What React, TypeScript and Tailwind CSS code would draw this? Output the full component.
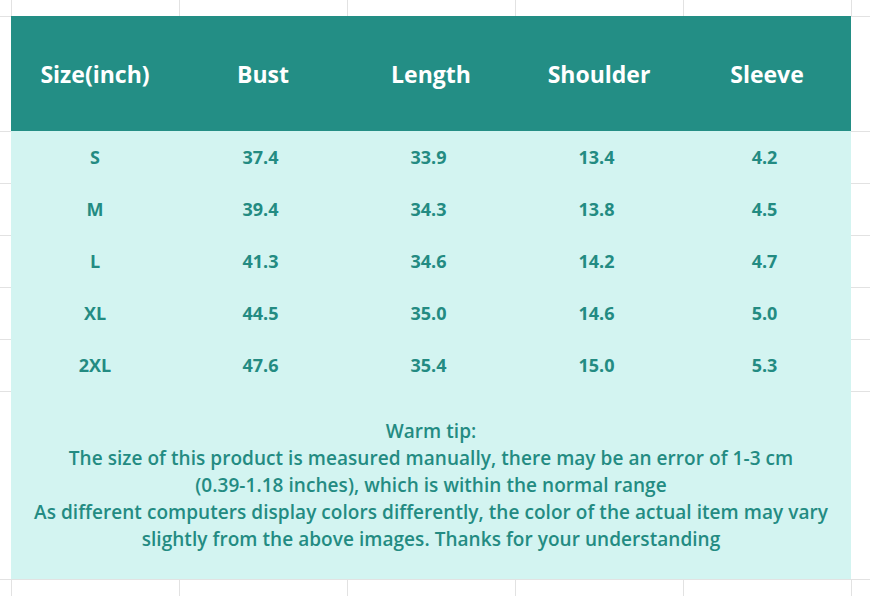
const headers = ['Size(inch)', 'Bust', 'Length', 'Shoulder', 'Sleeve']

const rows = [
  ['S', '37.4', '33.9', '13.4', '4.2'],
  ['M', '39.4', '34.3', '13.8', '4.5'],
  ['L', '41.3', '34.6', '14.2', '4.7'],
  ['XL', '44.5', '35.0', '14.6', '5.0'],
  ['2XL', '47.6', '35.4', '15.0', '5.3'],
]

// spreadsheet gridline cell for the white margins
function Blank({ className = '' }: { className?: string }) {
  return <div className={`border-[#e2e2e2] bg-white ${className}`} />
}

export default function App() {
  return (
    <div
      className="grid h-[596px] w-[870px] overflow-hidden bg-white grid-cols-[11px_repeat(5,168px)_1fr] grid-rows-[16px_115px_repeat(5,52px)_188px_1fr]"
      style={{ fontFamily: '"Open Sans", "Noto Sans", sans-serif' }}
    >
      {/* top margin */}
      <Blank />
      {headers.map((h) => (
        <Blank key={h} className="border-l" />
      ))}
      <Blank className="border-l" />

      {/* header */}
      <Blank className="border-t" />
      {headers.map((h) => (
        <div
          key={h}
          className="flex items-center justify-center bg-[#238e85] pt-[2px] text-[23px] font-bold text-white"
        >
          {h}
        </div>
      ))}
      <Blank className="border-t" />

      {/* size rows */}
      {rows.map((row) => (
        <div key={row[0]} className="contents">
          <Blank className="border-t" />
          {row.map((v, i) => (
            <div
              key={i}
              className={`flex items-center justify-center bg-[#d3f4f1] text-[18px] font-bold text-[#238b82] ${i > 0 ? 'pr-[5px]' : ''}`}
            >
              {v}
            </div>
          ))}
          <Blank className="border-t" />
        </div>
      ))}

      {/* warm tip */}
      <Blank className="border-t" />
      <div className="col-span-5 flex flex-col items-center justify-center bg-[#d3f4f1] text-center text-[19px] font-semibold leading-[27px] tracking-[0.05px] text-[#238b82]">
        <p>Warm tip:</p>
        <p>The size of this product is measured manually, there may be an error of 1-3 cm</p>
        <p>(0.39-1.18 inches), which is within the normal range</p>
        <p>As different computers display colors differently, the color of the actual item may vary</p>
        <p>slightly from the above images. Thanks for your understanding</p>
      </div>
      <Blank className="border-t" />

      {/* bottom margin */}
      <Blank className="border-t" />
      {headers.map((h) => (
        <Blank key={h} className="border-l border-t" />
      ))}
      <Blank className="border-l border-t" />
    </div>
  )
}
